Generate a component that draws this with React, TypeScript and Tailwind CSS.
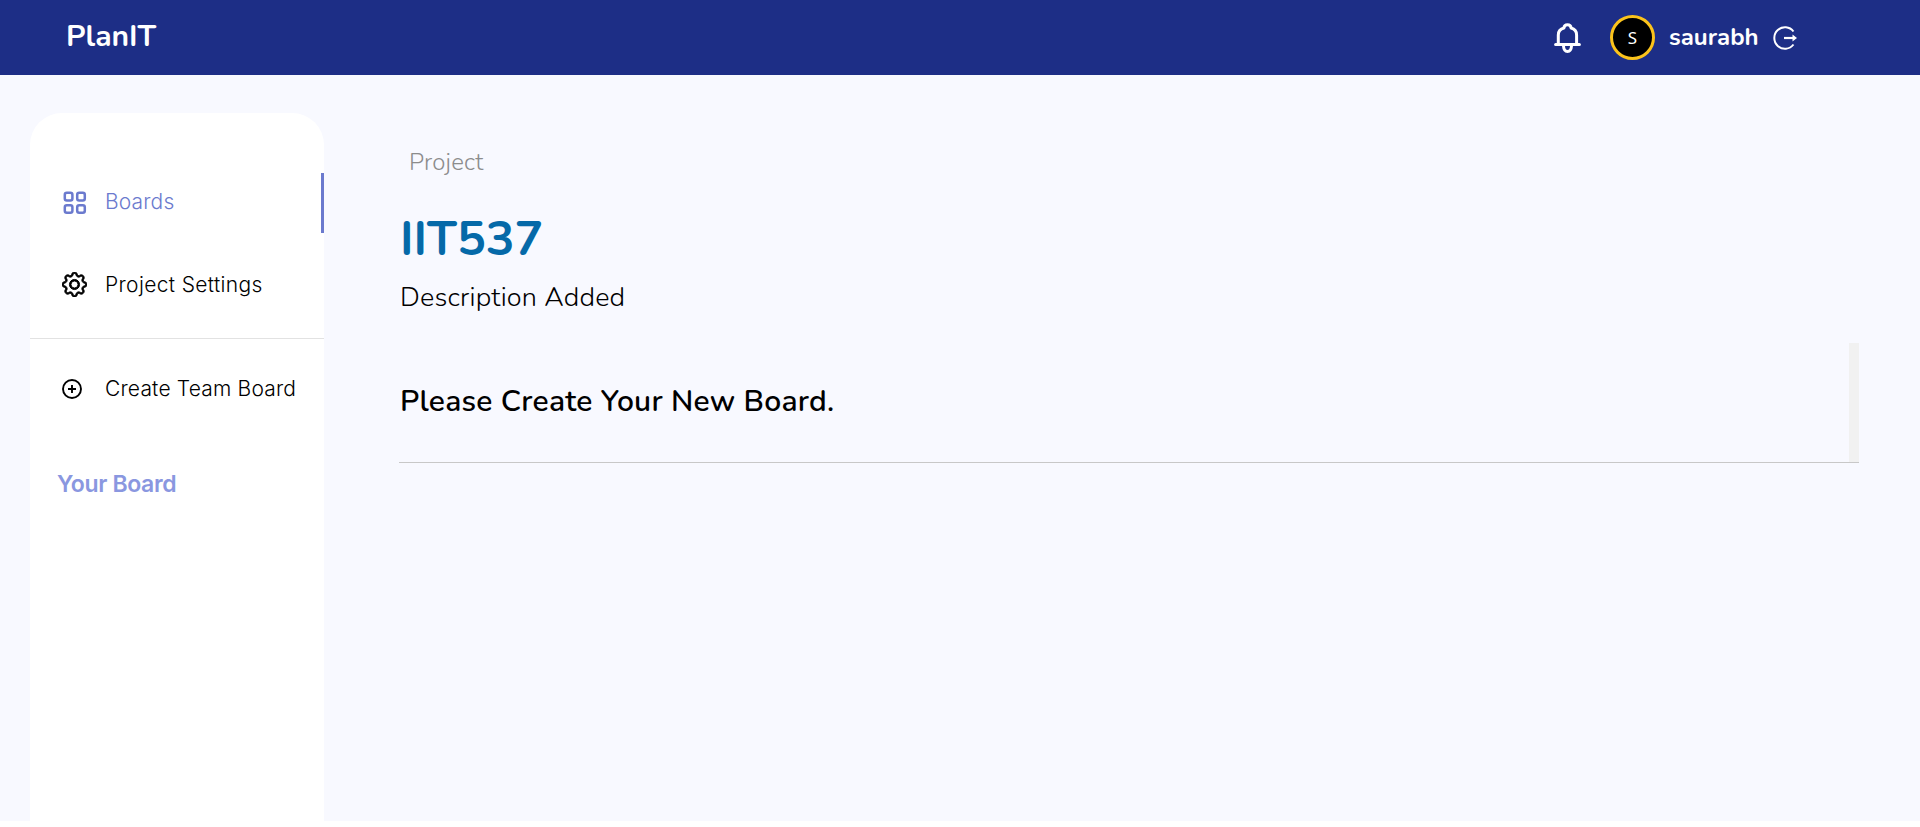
import { BsGear } from "react-icons/bs";

const ROUND = "font-['Nunito','Open_Sans','Noto_Sans',sans-serif]";
const INTER = "font-['Inter','Liberation_Sans',sans-serif]";

function BellIcon() {
  return (
    <svg width="28" height="30" viewBox="0 0 28 30" fill="none" stroke="white" strokeWidth="3" strokeLinejoin="round" strokeLinecap="round">
      <path d="M1.600 21.500H25.400" />
      <path d="M4.300 21.200V12C4.300 8.200 6.600 5.800 9.900 5C10.100 2.800 11.600 1.800 13.500 1.800S16.900 2.800 17.100 5C20.400 5.800 22.600 8.200 22.600 12V21.200" />
      <path d="M9.500 23C9.700 26.500 11.300 28.400 13.500 28.400S17.300 26.500 17.500 23" />
    </svg>
  );
}

function LogoutIcon() {
  return (
    <svg width="24" height="24" viewBox="0 0 24 24" fill="none" stroke="white" strokeWidth="2">
      <path d="M20.500 5.500A10.700 10.700 0 1 0 20.500 18.500" />
      <path d="M11 12H20" strokeWidth="2.200" />
      <path d="M19.500 8.500L24 12L19.500 15.500Z" fill="white" stroke="none" />
    </svg>
  );
}

function BoardsIcon() {
  return (
    <svg width="24" height="24" viewBox="0 0 24 24" fill="none" stroke="currentColor" strokeWidth="2.500">
      <rect x="1.800" y="1.800" width="7.600" height="7.600" rx="2" />
      <rect x="14.200" y="1.800" width="7.600" height="7.600" rx="2" />
      <rect x="1.800" y="14.200" width="7.600" height="7.600" rx="2" />
      <rect x="14.200" y="14.200" width="7.600" height="7.600" rx="2" />
    </svg>
  );
}

function PlusIcon() {
  return (
    <svg width="20" height="20" viewBox="0 0 20 20" fill="none" stroke="black" strokeWidth="1.900">
      <circle cx="10" cy="10" r="9" />
      <path d="M10 6V14M6 10H14" />
    </svg>
  );
}

function Header() {
  return (
    <header className={`flex h-[75px] items-center bg-[#1d2e86] pr-[123px] pl-[66px] text-white ${ROUND}`}>
      <div className="-mt-px text-[30px] leading-none font-bold">PlanIT</div>
      <div className="ml-auto flex items-center">
        <BellIcon />
        <div className="ml-[28px] flex size-[45px] items-center justify-center rounded-full border-3 border-[#fbc31b] bg-black font-['Noto_Sans'] text-[17px]">S</div>
        <span className="-mt-0.5 ml-[14px] w-[90px] text-2xl leading-none font-bold">saurabh</span>
        <span className="ml-[14px]"><LogoutIcon /></span>
      </div>
    </header>
  );
}

function Sidebar() {
  return (
    <aside className={`w-[294px] shrink-0 rounded-t-[32px] bg-white pt-[60px] ${INTER}`}>
      <nav className="text-[21px] font-[330] whitespace-nowrap">
        <a className="flex h-[60px] items-center border-r-3 border-[#6b7ace] pl-[33px] text-[#6b7ace]">
          <span className="w-[42px]"><BoardsIcon /></span>
          <span className="-mt-[2px] tracking-[0.15px]">Boards</span>
        </a>
        <a className="mt-[23px] flex h-[60px] items-center pl-[32px]">
          <span className="-mt-[3px] w-[43px]"><BsGear size={25} strokeWidth={0.6} /></span>
          <span className="-mt-[2px] tracking-[0.35px]">Project Settings</span>
        </a>
        <hr className="mt-[22px] border-[#e2e2e2]" />
        <a className="mt-[20px] flex h-[60px] items-center pl-[32px]">
          <span className="w-[43px]"><PlusIcon /></span>
          <span className="tracking-[0.18px]">Create Team Board</span>
        </a>
      </nav>
      <h2 className="mt-[48px] pl-[27px] text-[23px] font-semibold tracking-[-0.350px] text-[#8a97e0]">Your Board</h2>
    </aside>
  );
}

export default function App() {
  return (
    <div className="h-[827px] overflow-hidden bg-white">
      <Header />
      <div className="flex h-[746px] bg-[#f8f9ff] pt-[38px] pl-[30px]">
        <Sidebar />
        <main className={`ml-[75px] w-[1460px] text-black ${ROUND}`}>
          <div className="mt-[33px] pl-[10px] text-[24px] leading-8 font-light tracking-[0.2px] text-[#8c8c8c]">Project</div>
          <h1 className="mt-[31px] pl-px text-[48px] leading-[60px] font-bold text-[#0569a8]">IIT537</h1>
          <p className="mt-[11px] pl-px text-[27px] leading-9 font-light tracking-[0.2px]">Description Added</p>
          <section className="mt-[27px] flex h-[120px] items-center border-b border-[#c8c8c8]">
            <p className="-mt-[3px] pl-px text-[30px] font-[630] tracking-[0.25px]">Please Create Your New Board.</p>
            <div className="ml-auto w-[10px] self-stretch bg-[#f1f1f1]" />
          </section>
        </main>
      </div>
    </div>
  );
}
